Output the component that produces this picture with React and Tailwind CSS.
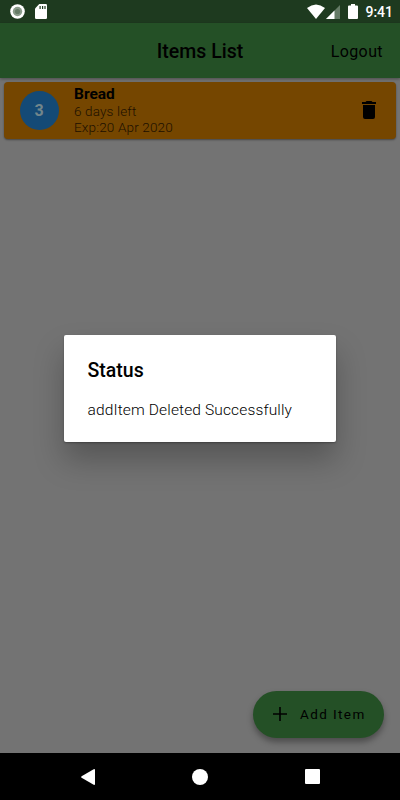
import { useState } from 'react';

const initialItems = [
  { id: 1, quantity: 3, name: 'Bread', daysLeft: 6, expiry: '20 Apr 2020' },
];

const StatusBar = () => (
  <div className="h-[23px] shrink-0 bg-[#1e3a1f] flex items-center justify-between pl-[10px] pr-[7px] text-white">
    <div className="flex items-center gap-[10px]">
      <svg className="w-[15px] h-[15px]" viewBox="0 0 15 15">
        <circle cx="7.5" cy="7.5" r="7.3" fill="#fff" />
        <circle cx="7.5" cy="7.5" r="4.7" fill="#8b9c8b" />
        <circle cx="7.5" cy="7.5" r="2.6" fill="#657b66" />
      </svg>
      <svg className="w-3 h-[15px]" viewBox="0 0 12 15">
        <path d="M4.3 0H10.8Q12 0 12 1.2V13.8Q12 15 10.8 15H1.2Q0 15 0 13.8V4.5Z" fill="#fff" />
        <path d="M4.5 2h1.2v3H4.5zM7 2h1.2v3H7zM9.4 2h1.2v3H9.4z" fill="#1e3a1f" />
      </svg>
    </div>
    <div className="flex items-center">
      <svg className="w-[18px] h-[15px]" viewBox="0 0 18 15">
        <path d="M0 4Q9-3.2 18 4L9 15Z" fill="#fff" />
      </svg>
      <svg className="w-[14px] h-[14px] ml-[1px]" viewBox="0 0 14 14">
        <path d="M14 0V14H0Z" fill="#657b66" />
        <path d="M8.5 5.5V14H0Z" fill="#fff" />
      </svg>
      <svg className="w-[10px] h-[15px] ml-2" viewBox="0 0 10 15">
        <path d="M3 0H7V1.5H9Q10 1.5 10 2.5V14Q10 15 9 15H1Q0 15 0 14V2.5Q0 1.5 1 1.5H3Z" fill="#fff" />
      </svg>
      <span className="ml-[7px] mt-px text-[14px] leading-4 font-medium">9:41</span>
    </div>
  </div>
);

const ItemCard = ({ item, onDelete }) => (
  <div className="h-[57px] rounded bg-[#754600] shadow-[0_1px_2px_rgba(0,0,0,0.4)] flex items-center pl-[15.5px] pr-5">
    <div className="w-[39px] h-[39px] shrink-0 rounded-full bg-[#144a76] text-[#72868b] text-base font-bold flex items-center justify-center">
      {item.quantity}
    </div>
    <div className="ml-[15.5px] pb-px flex-1 text-[13.5px] leading-4 font-light text-[#1c1000] tracking-[0.15px]">
      <p className="text-[15.5px] leading-[18px] font-bold text-black tracking-normal">{item.name}</p>
      <p>{item.daysLeft} days left</p>
      <p>Exp:{item.expiry}</p>
    </div>
    <button className="pb-px" onClick={() => onDelete(item.id)} aria-label="Delete">
      <svg className="w-[14px] h-[18px]" viewBox="0 0 14 18">
        <path d="M1 16Q1 18 3 18H11Q13 18 13 16V4H1ZM14 1H10.5L9.5 0H4.5L3.5 1H0V3H14Z" fill="#000" />
      </svg>
    </button>
  </div>
);

const StatusDialog = ({ title, message, onClose }) => (
  <div className="absolute inset-0 flex items-center justify-center" onClick={onClose}>
    <div className="w-[272px] h-[107px] mb-[23px] rounded-[2px] bg-white px-[23.5px] pt-6 shadow-[0_1px_2px_rgba(0,0,0,0.3),0_18px_30px_rgba(0,0,0,0.25)]">
      <h2 className="text-[19.5px] leading-6 font-medium text-black">{title}</h2>
      <p className="mt-[17px] text-[15.5px] leading-5 font-light text-black tracking-[0.14px] whitespace-nowrap">{message}</p>
    </div>
  </div>
);

const NavigationBar = () => (
  <div className="h-[47px] shrink-0 bg-black flex items-center justify-between pl-[81px] pr-20">
    <svg className="w-[14px] h-4" viewBox="0 0 14 16">
      <path d="M.6 7.2 12.7.2Q14-.2 14 1V15Q14 16.2 12.7 15.8L.6 8.8Q-.4 8 .6 7.2Z" fill="#fff" />
    </svg>
    <div className="w-4 h-4 rounded-full bg-white" />
    <div className="w-[15px] h-[15px] rounded-[1px] bg-white" />
  </div>
);

const App = () => {
  const [items, setItems] = useState(initialItems);
  const [showStatus, setShowStatus] = useState(true);

  const handleDelete = (id) => {
    setItems(items.filter((item) => item.id !== id));
    setShowStatus(true);
  };

  return (
    <div className="relative w-[400px] h-[800px] overflow-hidden bg-[#737373] flex flex-col font-['Roboto',sans-serif]">
      <StatusBar />

      {/* App bar */}
      <header className="h-[55px] shrink-0 bg-[#245026] shadow-[0_1px_3px_rgba(0,0,0,0.35)] grid grid-cols-[1fr_auto_1fr] items-center px-[17px] pt-[2px] text-black">
        <span />
        <h1 className="text-[19.5px] leading-6 font-medium">Items List</h1>
        <button className="justify-self-end text-[16px] leading-5 font-normal tracking-[0.4px]">Logout</button>
      </header>

      <main className="flex-1 flex flex-col justify-between">
        <div className="px-1 pt-1 flex flex-col gap-2">
          {items.map((item) => (
            <ItemCard key={item.id} item={item} onDelete={handleDelete} />
          ))}
        </div>

        <button className="self-end w-[131px] h-[47px] mr-4 mb-[15px] rounded-full bg-[#245026] shadow-[0_4px_6px_rgba(0,0,0,0.35)] flex items-center pl-[20px] pb-px text-black">
          <svg className="w-[14px] h-[14px]" viewBox="0 0 14 14">
            <path d="M7 0V14M0 7H14" stroke="#000" strokeWidth="1.6" />
          </svg>
          <span className="ml-[13px] text-[13.5px] leading-5 font-normal tracking-[1.4px] whitespace-nowrap">Add Item</span>
        </button>
      </main>

      <NavigationBar />

      {showStatus && (
        <StatusDialog
          title="Status"
          message="addItem Deleted Successfully"
          onClose={() => setShowStatus(false)}
        />
      )}
    </div>
  );
};

export default App;
